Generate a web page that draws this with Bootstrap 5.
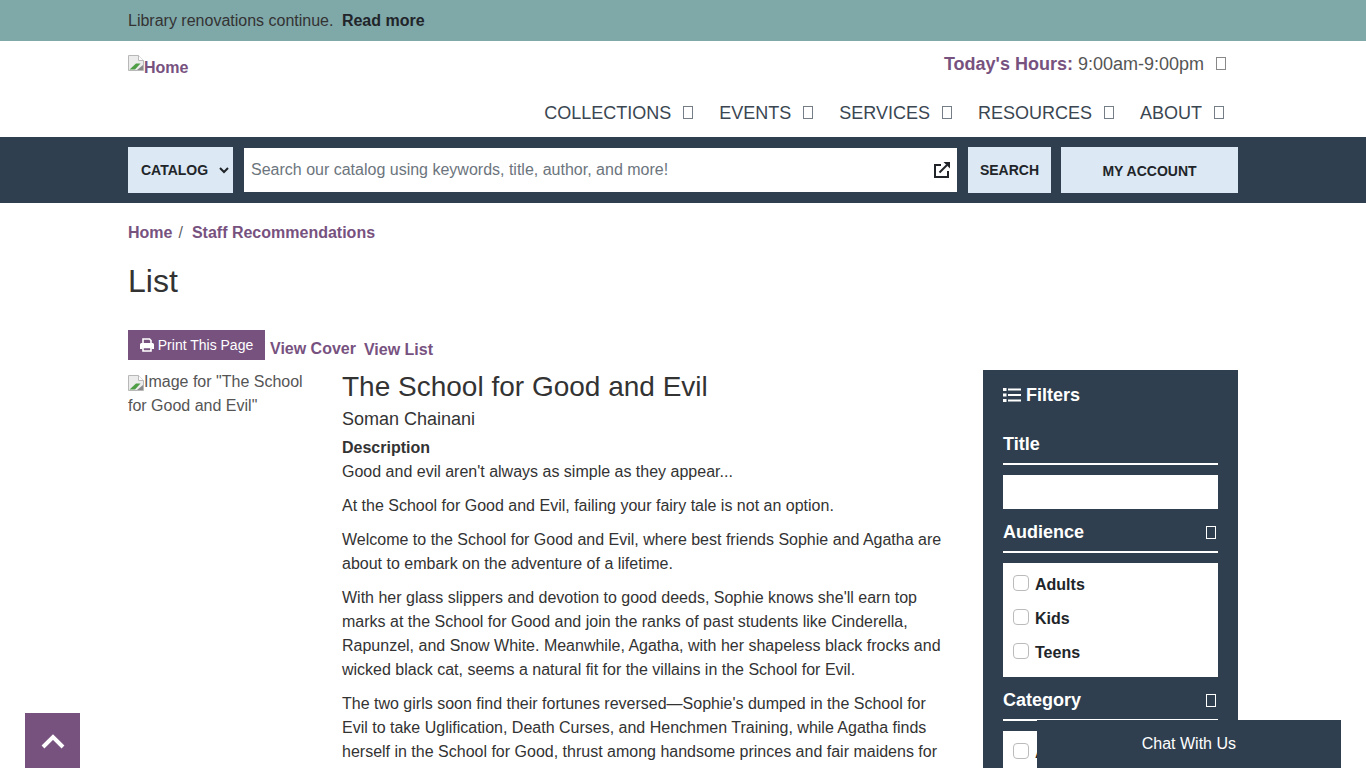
<!DOCTYPE html>
<html lang="en">
<head>
    <meta charset="UTF-8">
    <meta name="viewport" content="width=device-width, initial-scale=1.0">
    <title>List - Staff Recommendations</title>
    <link href="https://cdn.jsdelivr.net/npm/bootstrap@5.3.0/dist/css/bootstrap.min.css" rel="stylesheet">
    <style>
        html, body {
            height: 768px;
            overflow: hidden;
        }
        body {
            font-family: "Liberation Sans", Arial, sans-serif;
            font-size: 16px;
            line-height: 24px;
            color: #333;
            background: #fff;
        }
        a { text-decoration: none; }
        .page-wrap {
            width: 1110px;
            margin: 0 auto;
        }
        .notice-bar {
            height: 41px;
            background: #7fa8a9;
            color: #333;
        }
        .notice-bar a {
            color: #212529;
            font-weight: 700;
            margin-left: 4px;
        }
        .site-head { height: 96px; }
        .logo-link {
            color: #77527f;
            font-weight: 700;
            margin-top: 15px;
            height: 24px;
        }
        .logo-link svg { margin-top: -1px; }
        .hours {
            font-size: 18px;
            color: #555;
            padding: 11px 12px 0 0;
        }
        .hours b { color: #77527f; }
        .main-menu {
            gap: 26px;
            padding: 0 14px 0 0;
            margin-top: 25px;
            font-size: 18px;
            color: #3a4652;
        }
        .tofu {
            display: inline-block;
            width: 10px;
            height: 13px;
            border: 1px solid currentColor;
            margin-left: 7px;
            opacity: .7;
        }
        .main-menu .tofu { margin-left: 12px; }
        .search-band {
            height: 66px;
            background: #2f3f4f;
            padding-top: 10px;
        }
        .search-band .page-wrap { gap: 11px; }
        .catalog-pick {
            width: 105px;
            height: 46px;
            background-color: #dce8f3;
            background-image: url("data:image/svg+xml,%3csvg xmlns='http://www.w3.org/2000/svg' viewBox='0 0 10 8'%3e%3cpath fill='none' stroke='%23212529' stroke-width='2' d='M1 2l4 4 4-4'/%3e%3c/svg%3e");
            background-size: 10px 8px;
            background-position: right 4px center;
            border: 0;
            border-radius: 0;
            font-size: 14px;
            font-weight: 700;
            color: #212529;
            padding: 0 0 0 13px;
        }
        .search-box {
            width: 713px;
            height: 44px;
            margin-top: 1px;
            background: #fff;
            padding: 0 6px 0 5px;
        }
        .search-box input {
            border: 0;
            outline: 0;
            flex: 1;
            font-size: 16px;
            color: #333;
        }
        .search-box input::placeholder { color: #6c757d; }
        .band-btn {
            height: 46px;
            background: #dce8f3;
            color: #212529;
            border: 0;
            border-radius: 0;
            font-size: 14px;
            font-weight: 700;
            padding: 0;
        }
        .account-btn {
            padding-top: 2px;
            margin-left: -1px;
        }
        .crumbs {
            margin: 18px 0 0;
            color: #777;
        }
        .crumbs a {
            color: #77527f;
            font-weight: 700;
        }
        .crumbs .breadcrumb-item + .breadcrumb-item { padding-left: 6px; }
        .crumbs .breadcrumb-item + .breadcrumb-item::before { padding-right: 9px; }
        .page-title {
            font-size: 32px;
            line-height: 38px;
            font-weight: 400;
            margin: 17px 0 30px;
            color: #333;
        }
        .tool-row { height: 40px; }
        .print-btn {
            width: 137px;
            height: 30px;
            background: #77527f;
            color: #fff;
            font-size: 14px;
            line-height: 30px;
            text-align: center;
            white-space: nowrap;
        }
        .print-btn svg { margin-top: -2px; }
        .tool-link {
            color: #77527f;
            font-weight: 700;
            margin-left: 5px;
            padding-top: 7px;
        }
        .tool-link + .tool-link { margin-left: 8px; padding-top: 8px; }
        .cover-col {
            width: 214px;
            flex: none;
            padding-right: 30px;
            color: #555;
        }
        .book-col { width: 603px; flex: none; }
        .book-col h2 {
            font-size: 28px;
            line-height: 34px;
            font-weight: 400;
            margin: 0;
        }
        .book-author {
            font-size: 18px;
            line-height: 22px;
            margin: 4px 0 6px;
        }
        .book-col p { margin: 0 0 10px; }
        .filter-panel {
            width: 255px;
            flex: none;
            margin-left: 38px;
            height: 500px;
            background: #2f3f4f;
            color: #fff;
            padding: 13px 20px;
        }
        .filter-head {
            font-size: 18px;
            font-weight: 700;
            margin-bottom: 26px;
        }
        .filter-head svg { margin-top: -3px; }
        .filter-title {
            font-size: 18px;
            font-weight: 700;
            line-height: 22px;
            padding-bottom: 8px;
            border-bottom: 2px solid #fff;
            margin-bottom: 10px;
        }
        .filter-title .tofu { margin: 0 2px 0 0; opacity: 1; }
        .filter-input {
            height: 34px;
            background: #fff;
            margin-bottom: 12px;
            width: 100%;
            border: 0;
            display: block;
        }
        .filter-list {
            background: #fff;
            color: #212529;
            padding: 5px 10px 7px;
            margin-bottom: 12px;
            font-weight: 700;
        }
        .filter-row { height: 34px; }
        .filter-row input {
            width: 16px;
            height: 16px;
            margin: -4px 6px 0 0;
            border-color: #bbb;
            border-radius: 2px;
            flex: none;
        }
        .to-top {
            position: fixed;
            left: 25px;
            bottom: 0;
            width: 55px;
            height: 55px;
            background: #77527f;
        }
        .chat-tab {
            position: fixed;
            left: 1037px;
            bottom: 0;
            width: 304px;
            height: 48px;
            background: #2f3f4f;
            color: #fff;
            text-align: right;
            padding: 12px 105px 0 0;
        }
    </style>
</head>
<body>
    <div class="notice-bar">
        <div class="page-wrap d-flex align-items-center h-100">
            <span>Library renovations continue.</span>&nbsp;<a href="#">Read more</a>
        </div>
    </div>

    <header class="site-head">
        <div class="page-wrap d-flex justify-content-between">
            <a class="logo-link d-flex" href="#">
                <svg width="16" height="16" viewBox="0 0 16 16"><path d="M.5.500h10l5 5v10H.5z" fill="#ececec" stroke="#b8b8b8"/><path d="M10.500.500v5h5" fill="#fff" stroke="#b8b8b8"/><path d="M1.500 14.500L8 8.500h4.500L7 14.500z" fill="#4f9e46"/><path d="M9 15l6-5v5z" fill="#8a8a8a"/></svg>Home
            </a>
            <div class="d-flex flex-column align-items-end">
                <div class="hours"><b>Today's Hours:</b> 9:00am-9:00pm <span class="tofu"></span></div>
                <nav class="main-menu d-flex">
                    <span>COLLECTIONS<span class="tofu"></span></span>
                    <span>EVENTS<span class="tofu"></span></span>
                    <span>SERVICES<span class="tofu"></span></span>
                    <span>RESOURCES<span class="tofu"></span></span>
                    <span>ABOUT<span class="tofu"></span></span>
                </nav>
            </div>
        </div>
    </header>

    <div class="search-band">
        <form class="page-wrap d-flex">
            <select class="form-select catalog-pick"><option>CATALOG</option></select>
            <div class="search-box d-flex align-items-center">
                <input type="text" placeholder="Search our catalog using keywords, title, author, and more!">
                <svg width="18" height="18" viewBox="0 0 18 18" fill="none" stroke="#212529" stroke-width="2"><path d="M8 4H2v12h13v-6"/><path d="M6.500 11.500L14 4"/><path d="M10.500 1H17v6.500z" fill="#212529" stroke="none"/></svg>
            </div>
            <button type="button" class="band-btn" style="width:83px">SEARCH</button>
            <button type="button" class="band-btn account-btn" style="width:177px">MY ACCOUNT</button>
        </form>
    </div>

    <main class="page-wrap">
        <ol class="breadcrumb crumbs">
            <li class="breadcrumb-item"><a href="#">Home</a></li>
            <li class="breadcrumb-item"><a href="#">Staff Recommendations</a></li>
        </ol>
        <h1 class="page-title">List</h1>

        <div class="tool-row d-flex align-items-start">
            <a class="print-btn" href="#">
                <svg width="14" height="14" viewBox="0 0 14 14" class="me-1"><path d="M3 5.500V1h6.500L11 2.500v3" fill="none" stroke="#fff" stroke-width="1.600"/><path d="M1.500 5h11A1.500 1.500 0 0 1 14 6.500V11h-2.500V9h-9v2H0V6.500A1.500 1.500 0 0 1 1.500 5z" fill="#fff"/><path d="M3 9.500h8V13H3z" fill="none" stroke="#fff" stroke-width="1.600"/></svg>Print This Page
            </a>
            <a class="tool-link" href="#">View Cover</a>
            <a class="tool-link" href="#">View List</a>
        </div>

        <div class="d-flex">
            <div class="cover-col">
                <svg width="16" height="16" viewBox="0 0 16 16"><path d="M.5.500h10l5 5v10H.5z" fill="#ececec" stroke="#b8b8b8"/><path d="M10.500.500v5h5" fill="#fff" stroke="#b8b8b8"/><path d="M1.500 14.500L8 8.500h4.500L7 14.500z" fill="#4f9e46"/><path d="M9 15l6-5v5z" fill="#8a8a8a"/></svg>Image for "The School for Good and Evil"
            </div>
            <div class="book-col">
                <h2>The School for Good and Evil</h2>
                <div class="book-author">Soman Chainani</div>
                <div class="fw-bold">Description</div>
                <p>Good and evil aren't always as simple as they appear...</p>
                <p>At the School for Good and Evil, failing your fairy tale is not an option.</p>
                <p>Welcome to the School for Good and Evil, where best friends Sophie and Agatha are about to embark on the adventure of a lifetime.</p>
                <p>With her glass slippers and devotion to good deeds, Sophie knows she'll earn top marks at the School for Good and join the ranks of past students like Cinderella, Rapunzel, and Snow White. Meanwhile, Agatha, with her shapeless black frocks and wicked black cat, seems a natural fit for the villains in the School for Evil.</p>
                <p>The two girls soon find their fortunes reversed—Sophie's dumped in the School for Evil to take Uglification, Death Curses, and Henchmen Training, while Agatha finds herself in the School for Good, thrust among handsome princes and fair maidens for</p>
            </div>
            <aside class="filter-panel">
                <div class="filter-head">
                    <svg width="18" height="14" viewBox="0 0 18 14" fill="#fff"><path d="M0 0h3.500v3H0zM0 5.500h3.500v3H0zM0 11h3.500v3H0zM5 .500h13v2H5zM5 6h13v2H5zM5 11.500h13v2H5z"/></svg>
                    Filters
                </div>
                <div class="filter-title">Title</div>
                <input type="text" class="filter-input" aria-label="Title">
                <div class="filter-title d-flex justify-content-between align-items-center">Audience<span class="tofu"></span></div>
                <div class="filter-list">
                    <label class="filter-row d-flex align-items-center"><input class="form-check-input" type="checkbox">Adults</label>
                    <label class="filter-row d-flex align-items-center"><input class="form-check-input" type="checkbox">Kids</label>
                    <label class="filter-row d-flex align-items-center"><input class="form-check-input" type="checkbox">Teens</label>
                </div>
                <div class="filter-title d-flex justify-content-between align-items-center">Category<span class="tofu"></span></div>
                <div class="filter-list">
                    <label class="filter-row d-flex align-items-center"><input class="form-check-input" type="checkbox">Adult</label>
                </div>
            </aside>
        </div>
    </main>

    <a class="to-top d-flex align-items-center justify-content-center" href="#" aria-label="Back to top">
        <svg width="24" height="16" viewBox="0 0 24 16" fill="none" stroke="#fff" stroke-width="4"><path d="M2 14L12 4l10 10"/></svg>
    </a>
    <div class="chat-tab">Chat With Us</div>

    <script src="https://cdn.jsdelivr.net/npm/bootstrap@5.3.0/dist/js/bootstrap.bundle.min.js"></script>
</body>
</html>
